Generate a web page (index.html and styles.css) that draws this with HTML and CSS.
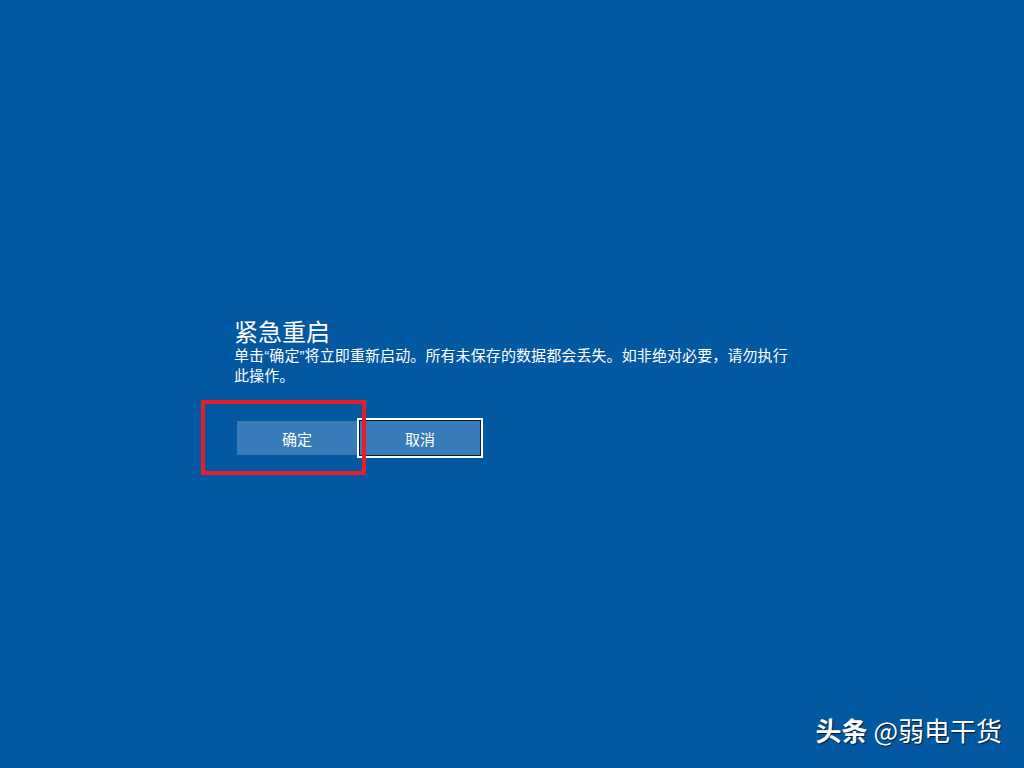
FILE: index.html
```html
<!DOCTYPE html>
<html lang="zh-CN">
<head>
<meta charset="utf-8">
<title>紧急重启</title>
<link rel="stylesheet" href="styles.css">
</head>
<body>
<main class="screen">
  <section class="dialog">
    <h1 class="title">紧急重启</h1>
    <p class="message">单击“确定”将立即重新启动。所有未保存的数据都会丢失。如非绝对必要，请勿执行此操作。</p>
    <div class="actions">
      <button class="btn">确定</button>
      <button class="btn btn-focus">取消</button>
      <span class="highlight"></span>
    </div>
  </section>
  <div class="watermark"><b>头条</b> @弱电干货</div>
</main>
</body>
</html>
```

FILE: styles.css
```css
html, body {
  margin: 0;
  padding: 0;
  height: 100%;
}

body {
  background: #0358a2;
  color: #fff;
  font-family: "Noto Sans", "Noto Sans CJK SC", sans-serif;
  overflow: hidden;
}

.screen {
  position: relative;
  height: 768px;
}

.dialog {
  padding: 316px 0 0 234px;
  width: 562px;
}

.title {
  margin: 0;
  font-family: "Noto Sans CJK SC", sans-serif;
  font-weight: 400;
  font-size: 24px;
  line-height: 30px;
}

/* Latin face first so the curly quotes stay narrow */
.message {
  margin: 0;
  font-family: "Liberation Sans", "Noto Sans CJK SC", sans-serif;
  font-size: 15px;
  line-height: 20px;
  letter-spacing: 0.1px;
}

.actions {
  position: relative;
  display: flex;
  gap: 3px;
  margin: 35px 0 0 3px;
}

.btn {
  width: 120px;
  height: 34px;
  padding: 0;
  border: 0;
  background: #377bb8;
  color: #fff;
  font-family: "Noto Sans CJK SC", sans-serif;
  font-size: 15px;
}

.btn-focus {
  box-shadow: 0 0 0 1px #0b1c33, 0 0 0 3px #fff;
}

.highlight {
  position: absolute;
  left: -36px;
  top: -21px;
  width: 157px;
  height: 67px;
  border: 4px solid #e41f2b;
}

.watermark {
  position: absolute;
  right: 22px;
  bottom: 22px;
  font-family: "Noto Sans CJK SC", sans-serif;
  font-size: 26px;
  line-height: 32px;
  color: #fff;
  text-shadow: 1px 1px 1px rgba(0, 0, 0, 0.7);
}

.watermark b {
  font-weight: 700;
}
```
